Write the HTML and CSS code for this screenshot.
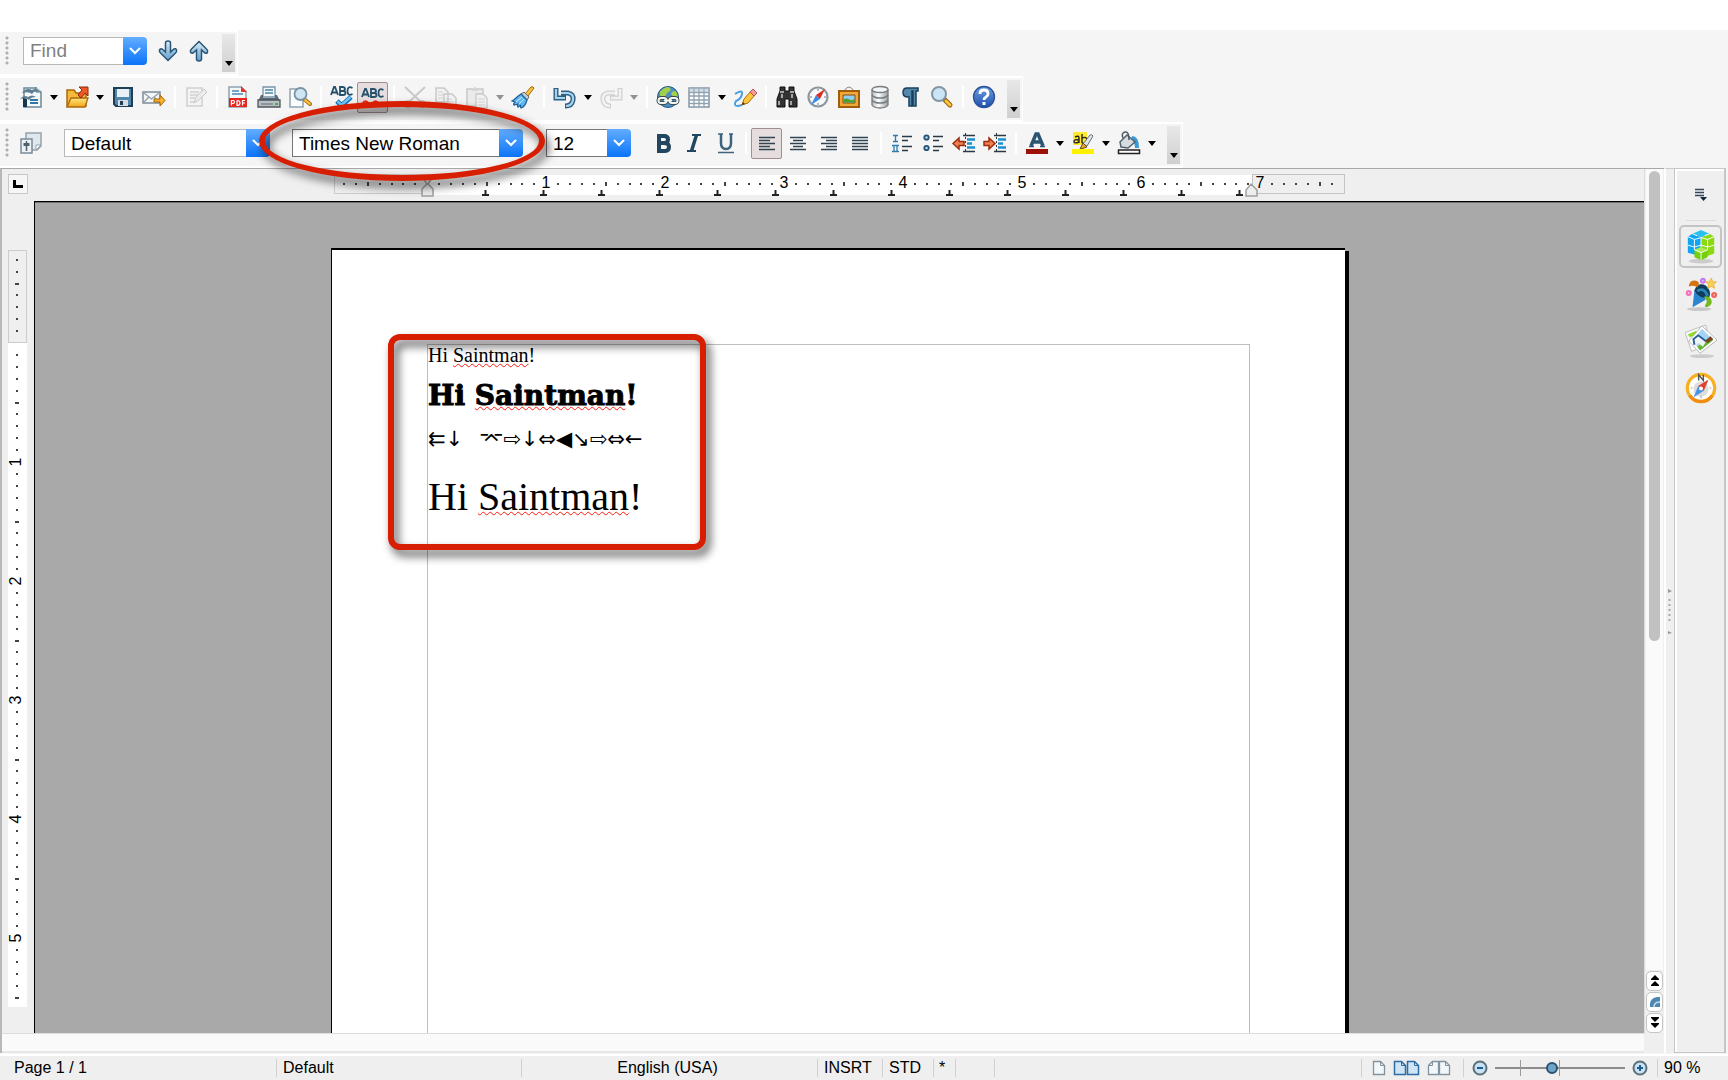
FILE: index.html
```html
<!DOCTYPE html>
<html lang="en">
<head>
<meta charset="utf-8">
<title>Untitled 1 - Writer</title>
<link rel="stylesheet" href="styles.css">
</head>
<body>
<svg class="defs" aria-hidden="true">
  <defs>
    <linearGradient id="gBlue" x1="0" y1="0" x2="0" y2="1"><stop offset="0" stop-color="#d9ecf8"/><stop offset="1" stop-color="#5f9fcb"/></linearGradient>
    <linearGradient id="gGold" x1="0" y1="0" x2="0" y2="1"><stop offset="0" stop-color="#ffe680"/><stop offset="1" stop-color="#f2a516"/></linearGradient>
    <linearGradient id="gGrey" x1="0" y1="0" x2="1" y2="0"><stop offset="0" stop-color="#b9bdc0"/><stop offset=".4" stop-color="#fff"/><stop offset="1" stop-color="#9a9ea1"/></linearGradient>
    <linearGradient id="gHelp" x1="0" y1="0" x2="0" y2="1"><stop offset="0" stop-color="#6f9fe0"/><stop offset="1" stop-color="#1d4fae"/></linearGradient>
    <symbol id="caret" viewBox="0 0 8 5"><path d="M0 0h8L4 5z" fill="currentColor"/></symbol>
    <symbol id="chev" viewBox="0 0 12 8"><path d="M1.500 1.500 6 6l4.500-4.500" fill="none" stroke="#fff" stroke-width="2" stroke-linecap="round"/></symbol>
  </defs>
</svg>

<header class="toolbars">
  <div class="toolbar" role="toolbar" aria-label="Find">
    <span class="grip"></span>
    <div class="combo find"><input type="text" placeholder="Find" aria-label="Find"><button class="drop" aria-label="Find history"><svg width="12" height="8"><use href="#chev"/></svg></button></div>
    <button class="tool" aria-label="Find next"><svg viewBox="0 0 24 24"><path d="M9.500 4q0-2 2.500-2t2.500 2v9l3.500-3q2-1 2.500 1t-1 3l-7.500 7.500-7.500-7.500q-1.500-1.500-1-3t2.500-1l3.500 3z" fill="url(#gBlue)" stroke="#2c5675" stroke-width="1.500"/></svg></button>
    <button class="tool" aria-label="Find previous"><svg viewBox="0 0 24 24"><path d="M9.500 20q0 2 2.500 2t2.500-2v-9l3.500 3q2 1 2.500-1t-1-3l-7.500-7.500-7.500 7.500q-1.500 1.500-1 3t2.500 1l3.500-3z" fill="url(#gBlue)" stroke="#2c5675" stroke-width="1.500"/></svg></button>
    <button class="more" aria-label="More"><svg width="8" height="5"><use href="#caret"/></svg></button>
  </div>

  <div class="toolbar" role="toolbar" aria-label="Standard">
    <span class="grip"></span>
    <button class="tool" aria-label="New"><svg viewBox="0 0 24 24"><path d="M5 3h12l5 4v15H5z" fill="#f7fafc" stroke="#6d8798" stroke-width="1.500"/><path d="M17 2v5h5" fill="#c9dbe6" stroke="#49687d"/><path d="M3 8q4-6 10-3 5-3 8 2-6-2-8 2-3-3-10-1zM1 14q4-5 8-2 4-3 8 0-5 0-7 3-3-3-9-1z" fill="#5d7d93"/><path d="M11 15h8M11 18h8" stroke="#2f77a8" stroke-width="2"/><path d="M4 13v9h4v-8z" fill="#17374d"/></svg></button>
    <button class="caret" aria-label="New options"><svg width="8" height="5"><use href="#caret"/></svg></button>
    <button class="tool" aria-label="Open"><svg viewBox="0 0 24 24"><path d="M2 21V5h7l2 3h10v13z" fill="#f6b93b" stroke="#a96a0c" stroke-width="1.500"/><path d="M2 22l4-9h17l-3 9z" fill="url(#gGold)" stroke="#a96a0c" stroke-width="1.300"/><path d="M14 2h9v9l-3-3-4 5-3-3 4-5z" fill="#ef5a24" stroke="#8e2a0a"/></svg></button>
    <button class="caret" aria-label="Open options"><svg width="8" height="5"><use href="#caret"/></svg></button>
    <button class="tool" aria-label="Save"><svg viewBox="0 0 24 24"><path d="M3 3h18v18H5l-2-2z" fill="#5187ab" stroke="#1d3f56" stroke-width="2"/><path d="M6 4h12v8H6z" fill="#e9f1f6"/><path d="M7 15h10v6H7z" fill="#d5dde2"/><path d="M9 16h3v4H9z" fill="#1d3f56"/></svg></button>
    <button class="tool" aria-label="E-mail"><svg viewBox="0 0 24 24"><path d="M1 7h17v11H1z" fill="#f4f6f8" stroke="#7c8d99" stroke-width="1.500"/><path d="M2 8l7.500 6L17 8M2 17l5-5M17 17l-5-5" fill="none" stroke="#8fa0ab" stroke-width="1.300"/><path d="M12 14h6v-4l5 5.500-5 5.500v-4h-6z" fill="#fbb62c" stroke="#a65f07"/></svg></button>
    <span class="sep"></span>
    <button class="tool dim" aria-label="Edit file" disabled><svg viewBox="0 0 24 24"><path d="M3 3h15v18H3z" fill="#f4f4f4" stroke="#999" stroke-width="1.500"/><path d="M6 7h9M6 10h8M6 13h5M6 17h5" stroke="#999" stroke-width="1.500"/><path d="M10 18l2-6 8-8 3 3-8 8z" fill="#ddd" stroke="#888"/></svg></button>
    <span class="sep"></span>
    <button class="tool" aria-label="Export as PDF"><svg viewBox="0 0 24 24"><path d="M3 2h12l5 5v15H3z" fill="#f5f8fa" stroke="#8ea1ae" stroke-width="1.500"/><path d="M15 1l6 6h-6z" fill="#e8352a"/><path d="M6 6h7M6 9h11" stroke="#4d88b3" stroke-width="1.500"/><path d="M3 13h18v9H3z" fill="#e8261e"/><path d="M5.500 20.500v-5H7q1.500 0 1.500 1.500T7 18.500H5.500M11 15.500v5q3 0 3-2.500t-3-2.500M16.500 20.500v-5H19M16.500 18H19" fill="none" stroke="#fff" stroke-width="1.200"/></svg></button>
    <button class="tool" aria-label="Print"><svg viewBox="0 0 24 24"><path d="M6 2h12v10H6z" fill="#f4f8fb" stroke="#7793a8" stroke-width="1.300"/><path d="M8 5h8M8 8h8" stroke="#4b84ad" stroke-width="1.500"/><path d="M4 10h2v3h12v-3h2l3 6H1z" fill="#5c6b75"/><path d="M1 15h22v7H1z" fill="#b9c0c5" stroke="#4d565c" stroke-width="1.300"/><path d="M4 19h12" stroke="#606a70"/><path d="M18 18h3v2h-3z" fill="#3db53a"/></svg></button>
    <button class="tool" aria-label="Page preview"><svg viewBox="0 0 24 24"><path d="M2 4h13v18H2z" fill="#fbfcfd" stroke="#8ea1ae" stroke-width="1.500"/><path d="M16 14l6 5" stroke="#a96a0c" stroke-width="4" stroke-linecap="round"/><path d="M17 15l5 4" stroke="#ffc840" stroke-width="2" stroke-linecap="round"/><circle cx="12.500" cy="9" r="6" fill="#cfe6f5" stroke="#7a93a5" stroke-width="1.800"/></svg></button>
    <span class="sep"></span>
    <button class="tool" aria-label="Spelling"><svg viewBox="0 0 24 24"><path d="M1 10l3-8h1l3 8M2.500 7.500h4M10 2v8h3q2.500 0 2.500-2T13 6h-3 2.500Q15 6 15 4t-2.500-2zM22.500 3q-5-2.500-5 3t5 3" fill="none" stroke="#24506c" stroke-width="1.800"/><path d="M7 16l4.500 4.500L21 12" fill="none" stroke="#1a6fae" stroke-width="5"/><path d="M7.500 16.500l4 3.500 9-8" fill="none" stroke="#6fc5f7" stroke-width="2.500"/></svg></button>
    <button class="tool on" aria-label="AutoSpellcheck" aria-pressed="true"><svg viewBox="0 0 24 24"><path d="M1 12l3-8h1l3 8M2.500 9.500h4M10 4v8h3q2.500 0 2.500-2T13 8h-3 2.500Q15 8 15 6t-2.500-2zM22.500 5q-5-2.500-5 3t5 3" fill="none" stroke="#24506c" stroke-width="1.800"/><path d="M2 18q2.500-3 5 0t5 0 5 0 5 0" fill="none" stroke="#ee2a1a" stroke-width="2.500"/></svg></button>
    <span class="sep"></span>
    <button class="tool dim" aria-label="Cut" disabled><svg viewBox="0 0 24 24"><path d="M2 2l16 15M22 2L6 17" stroke="#888" stroke-width="2"/><circle cx="5" cy="19" r="3" fill="none" stroke="#888" stroke-width="2"/><circle cx="19" cy="19" r="3" fill="none" stroke="#888" stroke-width="2"/></svg></button>
    <button class="tool dim" aria-label="Copy" disabled><svg viewBox="0 0 24 24"><path d="M2 3h8l4 4v10H2zM10 9h8l4 4v9H10z" fill="#eee" stroke="#888" stroke-width="1.500"/><path d="M4 7h5M4 10h5M4 13h5M12 14h6M12 17h8M12 20h8" stroke="#999"/></svg></button>
    <button class="tool dim" aria-label="Paste" disabled><svg viewBox="0 0 24 24"><path d="M2 4h16v17H2z" fill="#ddd" stroke="#888" stroke-width="1.500"/><path d="M7 6V3h2q1-3 2 0h2v3z" fill="#aaa"/><path d="M11 9h7l4 4v10H11z" fill="#eee" stroke="#888" stroke-width="1.300"/><path d="M13 14h7M13 17h7M13 20h7" stroke="#999"/></svg></button>
    <button class="caret dim" aria-label="Paste options" disabled><svg width="8" height="5"><use href="#caret"/></svg></button>
    <button class="tool" aria-label="Format paintbrush"><svg viewBox="0 0 24 24"><path d="M14 9l6-7q2-1 3 1l-6 8z" fill="#ffc53a" stroke="#9b6408"/><path d="M13 7l5 5-2 3-6-6z" fill="#c4cdd4" stroke="#5e6b75"/><path d="M10 9l6 6q-2 7-6 8-1-2 0-3l-3 2q-1-2 0-3l-4 1q-1-1 1-3l-3-1q2-1 4-3t5-4z" fill="#62b6ee" stroke="#1b5e96" stroke-width="1.200"/><path d="M5 17l6-5M8 19l5-5" stroke="#cdeaff"/></svg></button>
    <span class="sep"></span>
    <button class="tool" aria-label="Undo"><svg viewBox="0 0 24 24"><path d="M3 3v10h10M8 8h7q6 1 5 7-1 6-8 6" fill="none" stroke="#2c5f84" stroke-width="5"/><path d="M3 4v9h9M8 8h7q6 1 5 7-1 6-7 6" fill="none" stroke="#a9d2ec" stroke-width="2.200"/></svg></button>
    <button class="caret" aria-label="Undo options"><svg width="8" height="5"><use href="#caret"/></svg></button>
    <button class="tool dim" aria-label="Redo" disabled><svg viewBox="0 0 24 24"><path d="M21 3v10H11M16 8H9q-6 1-5 7 1 6 8 6" fill="none" stroke="#999" stroke-width="5"/><path d="M21 4v9h-9M16 8H9q-6 1-5 7 1 6 7 6" fill="none" stroke="#eee" stroke-width="2.500"/></svg></button>
    <button class="caret dim" aria-label="Redo options" disabled><svg width="8" height="5"><use href="#caret"/></svg></button>
    <span class="sep"></span>
    <button class="tool" aria-label="Hyperlink"><svg viewBox="0 0 24 24"><circle cx="12" cy="12" r="10.500" fill="#4c8fc4" stroke="#285a83"/><path d="M4 7q4-5 9-5l2 3-4 3-2 4-5-1zM15 8q4-4 6 0l1 5-5-1z" fill="#a3cf4a"/><rect x="2.500" y="13" width="8" height="5" rx="2.500" fill="none" stroke="#3d4a50" stroke-width="4"/><rect x="13.500" y="13" width="8" height="5" rx="2.500" fill="none" stroke="#3d4a50" stroke-width="4"/><path d="M8 15.500h8" stroke="#3d4a50" stroke-width="4"/><rect x="2.500" y="13" width="8" height="5" rx="2.500" fill="none" stroke="#f4f6f0" stroke-width="2"/><rect x="13.500" y="13" width="8" height="5" rx="2.500" fill="none" stroke="#f4f6f0" stroke-width="2"/><path d="M8 15.500h8" stroke="#f4f6f0" stroke-width="2"/></svg></button>
    <button class="tool" aria-label="Table"><svg viewBox="0 0 24 24"><path d="M2 3h20v19H2z" fill="#fff" stroke="#8397a6" stroke-width="1.500"/><path d="M2 7.500h20M2 11h20M2 15h20M2 18.500h20M7 3v19M12 3v19M17 3v19" stroke="#8fa2b0" stroke-width="1.300"/><path d="M2 3h20v4H2z" fill="#a8bccb" opacity=".5"/></svg></button>
    <button class="caret" aria-label="Table options"><svg width="8" height="5"><use href="#caret"/></svg></button>
    <button class="tool" aria-label="Show draw functions"><svg viewBox="0 0 24 24"><path d="M2 9q8-5 7 0t-6 7q-3 5 2 5l4-1" fill="none" stroke="#4aa0df" stroke-width="2"/><path d="M9 20l2-6 7-8 4 4-7 8z" fill="#ffc83a" stroke="#a86c10"/><path d="M17 7l3-3 4 4-3 3z" fill="#f59a98" stroke="#b55"/><path d="M9 20l1-3 2 2z" fill="#333"/></svg></button>
    <span class="sep"></span>
    <button class="tool" aria-label="Find and replace"><svg viewBox="0 0 24 24"><path d="M5 2h5v4h4V2h5v4l3 8v8h-8v-8h-4v8H2v-8l3-8z" fill="#333" stroke="#111"/><path d="M5 7h4M15 7h4M4 16v4M16 16v4M7 9v4M17 9v4" stroke="#ccc" stroke-width="1.500"/></svg></button>
    <button class="tool" aria-label="Navigator"><svg viewBox="0 0 24 24"><circle cx="12" cy="12" r="9.500" fill="#f7f9fa" stroke="#8c979e" stroke-width="2.200"/><path d="M12 4v2M12 18v2M4 12h2M18 12h2" stroke="#777"/><path d="M5 20l5-10 4 4z" fill="#3b8de0"/><path d="M19 4l-5 10-4-4z" fill="#e4291e"/></svg></button>
    <button class="tool" aria-label="Gallery"><svg viewBox="0 0 24 24"><path d="M7 6q5-8 10 0" fill="none" stroke="#888"/><path d="M2 6h20v16H2z" fill="#f3a83a" stroke="#a05b0b" stroke-width="2"/><path d="M6 10h12v8H6z" fill="#8fd0f5" stroke="#8a4c06"/><path d="M6.500 17.500v-3q3-2 6 0t5-1v4z" fill="#4f9e34"/></svg></button>
    <button class="tool" aria-label="Data sources"><svg viewBox="0 0 24 24"><path d="M4 5v15q2 3 8 3t8-3V5z" fill="url(#gGrey)" stroke="#777e83" stroke-width="1.300"/><ellipse cx="12" cy="4.500" rx="8" ry="3" fill="#f3f4f5" stroke="#777e83" stroke-width="1.300"/><path d="M4 10q2 3 8 3t8-3M4 15q2 3 8 3t8-3" fill="none" stroke="#777e83" stroke-width="1.500"/></svg></button>
    <button class="tool" aria-label="Nonprinting characters"><svg viewBox="0 0 24 24"><path d="M19 3H8Q4 3 4 7.500t5 4.500h1v9h3V6h1v15h3V6h2z" fill="#5288ab" stroke="#1c3f58" stroke-width="1.500"/></svg></button>
    <button class="tool" aria-label="Zoom"><svg viewBox="0 0 24 24"><path d="M14 14l6 6" stroke="#9a6309" stroke-width="5" stroke-linecap="round"/><path d="M16 16l4 4" stroke="#ffc640" stroke-width="2.800" stroke-linecap="round"/><circle cx="9" cy="9" r="7" fill="#cbe5f6" stroke="#8496a3" stroke-width="2"/></svg></button>
    <span class="sep"></span>
    <button class="tool" aria-label="Help"><svg viewBox="0 0 24 24"><circle cx="12" cy="12" r="10.500" fill="url(#gHelp)" stroke="#2b4f98" stroke-width="1.300"/><path d="M8 9q0-4 4-4t4 4q0 2-2 3t-2 3" fill="none" stroke="#fff" stroke-width="2.800"/><path d="M10.500 17h3v3h-3z" fill="#fff"/></svg></button>
    <button class="more" aria-label="More"><svg width="8" height="5"><use href="#caret"/></svg></button>
  </div>

  <div class="toolbar" role="toolbar" aria-label="Formatting">
    <span class="grip"></span>
    <button class="tool" aria-label="Styles and formatting"><svg viewBox="0 0 24 24"><path d="M7 2h15v13l-4 4H7z" fill="#dfe7ec" stroke="#93a4b0" stroke-width="1.500"/><path d="M22 14h-5v5z" fill="#fff" stroke="#93a4b0"/><path d="M2 8h11v14H2z" fill="#eef2f4" stroke="#7a8b98" stroke-width="1.500"/><path d="M7.500 10v10" stroke="#4f6270" stroke-width="1.500"/><path d="M4.500 12h6v3h-6z" fill="#4f6270"/></svg></button>
    <div class="combo style"><select aria-label="Paragraph style"><option>Default</option></select><span class="drop"><svg width="12" height="8"><use href="#chev"/></svg></span></div>
    <div class="combo font"><select aria-label="Font name"><option>Times New Roman</option></select><span class="drop"><svg width="12" height="8"><use href="#chev"/></svg></span><span class="mark oval"></span></div>
    <div class="combo size"><select aria-label="Font size"><option>12</option></select><span class="drop"><svg width="12" height="8"><use href="#chev"/></svg></span></div>
    <button class="tool" aria-label="Bold"><svg viewBox="0 0 24 24"><path d="M8 5h5q4 0 4 3.500T13 12H9h4q5 0 5 4t-5 4H8z" fill="none" stroke="#22465f" stroke-width="4"/></svg></button>
    <button class="tool" aria-label="Italic"><svg viewBox="0 0 24 24"><path d="M10 4h9M5 20h9" stroke="#22465f" stroke-width="2"/><path d="M14.500 4l-5 16" stroke="#22465f" stroke-width="3.500"/></svg></button>
    <button class="tool" aria-label="Underline"><svg viewBox="0 0 24 24"><path d="M8 3v9q0 6 5 6t5-6V3" fill="none" stroke="#3d637d" stroke-width="2.500"/><path d="M5 3h5M16 3h4M5 21.500h16" stroke="#3d637d" stroke-width="1.500"/></svg></button>
    <span class="sep"></span>
    <button class="tool on" aria-label="Align left" aria-pressed="true"><svg viewBox="0 0 24 24"><path d="M4 6.500h16M4 9.500h11M4 12.500h16M4 15.500h11M4 18.500h16" stroke="#2f4350" stroke-width="1.500"/></svg></button>
    <button class="tool" aria-label="Centered"><svg viewBox="0 0 24 24"><path d="M4 6.500h16M7 9.500h10M4 12.500h16M7 15.500h10M4 18.500h16" stroke="#2f4350" stroke-width="1.500"/></svg></button>
    <button class="tool" aria-label="Align right"><svg viewBox="0 0 24 24"><path d="M4 6.500h16M9 9.500h11M4 12.500h16M9 15.500h11M4 18.500h16" stroke="#2f4350" stroke-width="1.500"/></svg></button>
    <button class="tool" aria-label="Justified"><svg viewBox="0 0 24 24"><path d="M4 6.500h16M4 9.500h16M4 12.500h16M4 15.500h16M4 18.500h16" stroke="#2f4350" stroke-width="1.500"/></svg></button>
    <span class="sep"></span>
    <button class="tool" aria-label="Numbering"><svg viewBox="0 0 24 24"><path d="M3 4.500h5M5.500 4v6M3 10.500h5M2 14.500h7M4 14v6M7 14v6M2 20.500h7" stroke="#2f7cae" stroke-width="1.300"/><path d="M12 5.500h10M12 9.500h6M12 15.500h10M12 19.500h6" stroke="#2a3a44" stroke-width="1.600"/></svg></button>
    <button class="tool" aria-label="Bullets"><svg viewBox="0 0 24 24"><circle cx="5.500" cy="6.500" r="2.200" fill="#b5d6ec" stroke="#235478" stroke-width="1.800"/><circle cx="5.500" cy="17" r="2.200" fill="#b5d6ec" stroke="#235478" stroke-width="1.800"/><path d="M12 5.500h10M12 9.500h6M12 15.500h10M12 19.500h6" stroke="#2a3a44" stroke-width="1.600"/></svg></button>
    <button class="tool" aria-label="Decrease indent"><svg viewBox="0 0 24 24"><path d="M13.500 2v20" stroke="#333" stroke-dasharray="2 2"/><path d="M11 4.500h12M11 20.500h12" stroke="#2a3a44" stroke-width="1.500"/><path d="M15 8.500h8M15 12.500h5M15 16.500h8" stroke="#1b8fd0" stroke-width="2.500"/><path d="M1 12.500L7 7v3.500h5v4H7V18z" fill="#f08050" stroke="#9d2c0c" stroke-width="1.500"/></svg></button>
    <button class="tool" aria-label="Increase indent"><svg viewBox="0 0 24 24"><path d="M13.500 2v20" stroke="#333" stroke-dasharray="2 2"/><path d="M11 4.500h12M11 20.500h12" stroke="#2a3a44" stroke-width="1.500"/><path d="M15 8.500h8M15 12.500h5M15 16.500h8" stroke="#1b8fd0" stroke-width="2.500"/><path d="M12 12.500L6 7v3.500H1v4h5V18z" fill="#f08050" stroke="#9d2c0c" stroke-width="1.500"/></svg></button>
    <span class="sep"></span>
    <button class="tool" aria-label="Font color"><svg viewBox="0 0 24 24"><path d="M6 15l5-12h2l5 12M8.500 11h7" fill="none" stroke="#2b5573" stroke-width="3.500"/><path d="M4 15.500h5M15 15.500h5" stroke="#2b5573" stroke-width="1.500"/><path d="M1 18h22v5H1z" fill="#9c1006"/></svg></button>
    <button class="caret" aria-label="Font color options"><svg width="8" height="5"><use href="#caret"/></svg></button>
    <button class="tool" aria-label="Highlighting"><svg viewBox="0 0 24 24"><path d="M2 1h14v13H2z" fill="#ffe92e"/><path d="M4 6q4-2 4 1v5M8 9q-5-1-5 1.500T8 11M11 3v9M11 7q5-2 5 2.500T11 12" fill="none" stroke="#222" stroke-width="1.400"/><path d="M12 13l7-9q2-1 3 1l-6 10z" fill="#dfe4e8" stroke="#66727a"/><path d="M12 12l4 4-3 1-4 1z" fill="#e7a72c" stroke="#6b4a0c"/><path d="M1 18h22v5H1z" fill="#fff200"/></svg></button>
    <button class="caret" aria-label="Highlighting options"><svg width="8" height="5"><use href="#caret"/></svg></button>
    <button class="tool" aria-label="Background color"><svg viewBox="0 0 24 24"><path d="M15 5q7 0 7 12h-4q0-6-4-8z" fill="#3c9ad4"/><path d="M3 11l7-7 8 7-7 6-7-1z" fill="#d6dde2" stroke="#56646e" stroke-width="1.500"/><path d="M6 7q-2-5 2-6t4 8" fill="none" stroke="#4b5962" stroke-width="1.500"/><path d="M1.500 19h21v3.500h-21z" fill="#fff" stroke="#222" stroke-width="1.500"/></svg></button>
    <button class="caret" aria-label="Background color options"><svg width="8" height="5"><use href="#caret"/></svg></button>
    <button class="more" aria-label="More"><svg width="8" height="5"><use href="#caret"/></svg></button>
  </div>
</header>

<main class="workspace">
  <section class="editor">
    <div class="corner"><button aria-label="Tab type"><svg width="10" height="8"><path d="M1.500 0v6.500H10" fill="none" stroke="#000" stroke-width="3"/></svg></button></div>
    <div class="hruler">
      <svg width="1014" height="32" aria-label="Horizontal ruler">
        <defs>
          <pattern id="inch" x="95" y="0" width="119" height="32" patternUnits="userSpaceOnUse"><path d="M11 15h2M23 15h2M35 15h2M47 15h2M71 15h2M83 15h2M94 15h2M106 15h2" stroke="#444" stroke-width="2"/><path d="M60 13v4" stroke="#444" stroke-width="2"/></pattern>
          <pattern id="tabs" x="124" y="0" width="58" height="32" patternUnits="userSpaceOnUse"><path d="M26 26h7M29.500 21v5" stroke="#222" stroke-width="2"/></pattern>
        </defs>
        <rect x="96" y="6" width="824" height="20" fill="#fff"/>
        <rect x="2.500" y="5.500" width="93" height="19" fill="#efefef" stroke="#ccc"/>
        <rect x="920.500" y="5.500" width="92" height="19" fill="#efefef" stroke="#c4c4c4"/>
        <rect x="4" y="8" width="1007" height="14" fill="url(#inch)"/>
        <rect x="124" y="19" width="790" height="9" fill="url(#tabs)"/>
        <path d="M91 9h9l-4 6 5 5v7H90v-7l5-5zM914 27v-6l5-6 6 6v6z" fill="#eee" stroke="#a0a0a0" stroke-width="1.500"/>
        <g class="digits"><text x="214" y="19">1</text><text x="333" y="19">2</text><text x="452" y="19">3</text><text x="571" y="19">4</text><text x="690" y="19">5</text><text x="809" y="19">6</text><text x="928" y="19">7</text></g>
      </svg>
    </div>
    <div class="vruler">
      <svg width="32" height="831" aria-label="Vertical ruler">
        <defs><pattern id="vinch" x="0" y="142" width="32" height="119" patternUnits="userSpaceOnUse"><path d="M14 12h2M14 24h2M14 36h2M14 48h2M14 71h2M14 83h2M14 95h2M14 107h2M13 60h4" stroke="#444" stroke-width="2"/></pattern></defs>
        <rect x="6" y="141" width="19" height="665" fill="#fff"/>
        <rect x="6.500" y="49.500" width="18" height="92" fill="#efefef" stroke="#ccc"/>
        <rect x="8" y="54" width="15" height="750" fill="url(#vinch)"/>
        <g class="digits"><text transform="translate(19 261) rotate(-90)">1</text><text transform="translate(19 380) rotate(-90)">2</text><text transform="translate(19 499) rotate(-90)">3</text><text transform="translate(19 618) rotate(-90)">4</text><text transform="translate(19 737) rotate(-90)">5</text></g>
      </svg>
    </div>
    <div class="canvas">
      <article class="page">
        <div class="frame">
          <p class="times">Hi <u>Saintman</u>!</p>
          <p class="latin">Hi <u>Saintman</u>!</p>
          <p class="arrows">⇇↓&emsp14;&emsp14;&emsp14;⌤⇨↓⇔◀↘⇨⇔←</p>
          <p class="times large">Hi <u>Saintman</u>!</p>
          <span class="mark box"></span>
        </div>
      </article>
    </div>
    <div class="vscroll">
      <div class="track"><span class="thumb"></span></div>
      <button aria-label="Previous page"><svg width="8" height="12"><path d="M4 0l4 4v1H0V4zM4 6l4 4v1H0v-1z"/></svg></button>
      <button aria-label="Navigation"><svg width="10" height="10"><path d="M0 10V6q1-5 7-6h3v10z" fill="#4f87b0"/><path d="M4 10q0-5 6-5" fill="none" stroke="#bcdcf2" stroke-width="1.500"/></svg></button>
      <button aria-label="Next page"><svg width="8" height="12"><path d="M4 5l4-4V0H0v1zM4 11l4-4V6H0v1z"/></svg></button>
    </div>
    <div class="hscroll"></div>
  </section>

  <div class="splitter"><svg width="6" height="46"><path d="M1 1l4 2-4 2zM1 43l4 2-4 1z" fill="#999"/><path d="M2.500 11v25" stroke="#aaa" stroke-width="2" stroke-dasharray="2 3"/></svg></div>

  <aside class="sidebar">
    <button class="menu" aria-label="Sidebar settings"><svg width="12" height="13"><path d="M0 1.500h9M0 4.500h9M0 7.500h9" stroke="#34465c" stroke-width="1.500"/><path d="M5 9h7l-3.500 4z" fill="#14243f"/></svg></button>
    <button class="tab on" aria-label="Properties"><svg viewBox="0 0 34 36"><ellipse cx="17" cy="33" rx="13" ry="2.500" fill="#ccc"/><path d="M8 4l9-4 9 4-9 4z" fill="#2cc0ee"/><path d="M3 7l5-3 9 4v20L3 24z" fill="#10a5f0"/><path d="M17 8l9-4 5 3v18l-14 5z" fill="#8ad90f"/><path d="M10 21l7-3 7 3v8l-7 3-7-3z" fill="#75cf0c"/><path d="M10 21l7-3 7 3-7 3z" fill="#aaec55"/><path d="M3 7l7 3 7-2 7 2 7-3M10 10v11M17 8v10M24 10v11M3 16l7 2 7-2 7 2 7-2M17 24v8M10 21l7 3 7-3M8 4l5 2M26 4l-5 2" fill="none" stroke="#fff"/></svg></button>
    <button class="tab" aria-label="Styles and Formatting"><svg viewBox="0 0 34 36"><ellipse cx="15" cy="34" rx="13" ry="2" fill="#c9c9c9"/><path d="M10 14L8 32l14-8-2-6z" fill="#2b86cf"/><path d="M10 14q4-9 12-5 6 5 4 12-10 4-16-7z" fill="#0e3d5c"/><path d="M13 15q7-5 11 5" fill="none" stroke="#2a86b8" stroke-width="3"/><path d="M4 10q1-8 8-6 5 2 1 7-3-3-9-1z" fill="#d4730f"/><path d="M20 21q5-2 8 3 2 6-5 8-3 0-1-3 3-4-2-8z" fill="#74b820"/><path d="M28 1l1.500 4 4 0-3 3 1 4-3.500-2-4 2 1-4-3-3 4 0z" fill="#f7d058" stroke="#e8a820" stroke-width=".7"/><g fill="none" stroke-width="2.400"><circle cx="19" cy="4" r="2" stroke="#c97af0"/><circle cx="4" cy="17" r="2" stroke="#f472ba"/><circle cx="31" cy="19" r="2" stroke="#f3625a"/></g></svg></button>
    <button class="tab" aria-label="Gallery"><svg viewBox="0 0 34 36"><ellipse cx="18" cy="34" rx="13" ry="2" fill="#ccc"/><path d="M0 9l22-8 5 20L7 29z" fill="#fafafa" stroke="#bbb"/><path d="M3 11l9-4 1 4-8 3z" fill="#8edb1d"/><path d="M18 2l16 15-18 14L4 18z" fill="#fff" stroke="#b4b4b4"/><path d="M18 5l12 12-14 11L8 18z" fill="#a3d4f5"/><path d="M30 17L16 28l-3-4 14-10z" fill="#66b52a"/><path d="M9 17l5-5 8 7-3 5-5-4-2 3z" fill="#eef4f8"/><path d="M10 22l-1-6 5-4 8 6" fill="none" stroke="#245e96" stroke-width="2"/><path d="M21 18l6-5 3 3-6 4z" fill="#7b4522"/></svg></button>
    <button class="tab" aria-label="Navigator"><svg viewBox="0 0 34 36"><circle cx="17" cy="18" r="14.500" fill="#fff" stroke="#f6b020" stroke-width="3.500"/><path d="M5 26a14.500 14.500 0 0 0 24 0" fill="none" stroke="#f08c10" stroke-width="3.500"/><path d="M14.500 10V4l5 6V4" fill="none" stroke="#555" stroke-width="1.500"/><circle cx="17" cy="19" r="8" fill="#ddd"/><path d="M17 26v3M8 18H6M28 18h-2" stroke="#999"/><path d="M9 28l5-12 6 5z" fill="#4b95e8"/><path d="M25 9l-5 12-6-5z" fill="#e0412f"/><circle cx="17" cy="18.500" r="2" fill="#fff"/></svg></button>
  </aside>
</main>

<footer class="status">
  <span class="cell page-no">Page 1 / 1</span>
  <span class="cell page-style">Default</span>
  <span class="cell lang">English (USA)</span>
  <span class="cell insert">INSRT</span>
  <span class="cell select">STD</span>
  <span class="cell changed">*</span>
  <span class="cell signature"></span>
  <span class="cell info"></span>
  <span class="cell views">
    <button aria-label="Single page"><svg width="14" height="16"><path d="M1.500 1.500h7l4 4v9h-11z" fill="#f4f7f9" stroke="#8293a0" stroke-width="1.300"/><path d="M8.500 1.500v4h4" fill="none" stroke="#8293a0"/></svg></button>
    <button aria-label="Multiple pages"><svg width="27" height="16"><path d="M1.500 1.500h7l4 4v9h-11zM14.500 1.500h7l4 4v9h-11z" fill="#cfe5f6" stroke="#2d6da3" stroke-width="1.500"/><path d="M8.500 1.500v4h4M21.500 1.500v4h4" fill="none" stroke="#2d6da3"/></svg></button>
    <button aria-label="Book view"><svg width="24" height="16"><path d="M1.500 5.500l4-4h6v13h-10zM12.500 1.500h6l4 4v9h-10z" fill="#f4f7f9" stroke="#8293a0" stroke-width="1.300"/><path d="M5.500 1.500v4h-4M18.500 1.500v4h4" fill="none" stroke="#8293a0"/></svg></button>
  </span>
  <span class="cell zoom">
    <button aria-label="Zoom out"><svg width="16" height="16"><circle cx="8" cy="8" r="6.500" fill="#c6e2f6" stroke="#5f6f7a" stroke-width="2"/><path d="M5 8h6" stroke="#1d5c8c" stroke-width="2"/></svg></button>
    <input type="range" min="0" max="100" value="43" aria-label="Zoom">
    <button aria-label="Zoom in"><svg width="16" height="16"><circle cx="8" cy="8" r="6.500" fill="#c6e2f6" stroke="#5f6f7a" stroke-width="2"/><path d="M5 8h6M8 5v6" stroke="#1d5c8c" stroke-width="2"/></svg></button>
  </span>
  <span class="cell percent">90 %</span>
</footer>
</body>
</html>
```
FILE: styles.css
```css
* { box-sizing: border-box; }

body {
  margin: 0;
  padding-top: 30px;
  height: 100vh;
  display: flex;
  flex-direction: column;
  overflow: hidden;
  background: #fff;
  color: #000;
  font-family: "Liberation Sans", Arial, sans-serif;
  font-size: 16px;
}

button, input, select { font: inherit; color: inherit; margin: 0; }
button { padding: 0; border: 0; background: none; display: flex; align-items: center; justify-content: center; }
.defs { position: absolute; width: 0; height: 0; }

/* Toolbars */
.toolbars { background: #f5f5f5; display: flex; flex-direction: column; align-items: flex-start; }
.toolbar {
  display: flex;
  align-items: center;
  height: 46px;
  padding: 0 2px 4px 5px;
  border: solid #fff;
  border-width: 2px 1px 2px 0;
}
.grip {
  width: 10px;
  height: 30px;
  background: radial-gradient(circle at 2px 2px, #b0b0b0 1px, transparent 2px) 0 0 / 10px 5px;
  background-repeat: repeat-y;
}
.tool { width: 31px; height: 31px; flex: none; }
.tool svg { width: 24px; height: 24px; }
.tool.on { border: 1px solid #a08f8f; border-radius: 2px; background: #e6dede; }
.caret { width: 15px; height: 31px; flex: none; }
.dim { opacity: .4; }
.sep { width: 11px; height: 22px; flex: none; background: linear-gradient(#fff, #fff) center / 2px 100% no-repeat; }
.more {
  width: 13px;
  height: 38px;
  margin: 0 0 -4px 8px;
  padding-bottom: 6px;
  align-items: flex-end;
  background: linear-gradient(#e8e8e8, #cfcfcf);
}

.combo { display: flex; position: relative; height: 28px; font-size: 19px; }
.combo input, .combo select {
  flex: 1;
  min-width: 0;
  height: 28px;
  padding: 0 0 0 6px;
  border: 1px solid #b8b8b8;
  border-right: 0;
  border-radius: 0;
  background: #fff;
  appearance: none;
  outline: 0;
}
.combo input::placeholder { color: #808080; opacity: 1; }
.drop {
  width: 24px;
  height: 28px;
  display: flex;
  align-items: center;
  justify-content: center;
  border-radius: 0 4px 4px 0;
  background: linear-gradient(#63adff, #0a74f8);
  pointer-events: none;
}
.find { width: 124px; margin: 0 5px 0 8px; }
.style { width: 206px; margin-left: 18px; }
.font { width: 231px; margin-left: 22px; }
.font select, .size select { border-color: #777; }
.size { width: 85px; margin: 0 16px 0 23px; }

/* Red annotations */
.mark {
  position: absolute;
  z-index: 5;
  border: 6px solid #d81e00;
  filter: drop-shadow(4px 6px 5px rgba(0, 0, 0, .7));
  pointer-events: none;
}
.oval { left: -33px; top: -28px; width: 286px; height: 80px; border-radius: 50%; }
.box { left: -40px; top: -11px; width: 318px; height: 216px; border-radius: 12px; }

/* Workspace */
.workspace { flex: 1; min-height: 0; display: flex; background: #f5f5f5; padding-bottom: 1px; }
.editor {
  flex: 1;
  min-width: 0;
  display: grid;
  grid-template: 32px minmax(0, 1fr) 20px / 32px minmax(0, 1fr) 20px;
  border-top: 1px solid #a8a8a8;
  border-left: 2px solid #b8b8b8;
  background: #efefef;
}
.corner { padding: 5px 0 0 6px; }
.corner button { width: 20px; height: 20px; border: 1px solid #c8c8c8; background: #f6f6f6; }
.hruler { display: flex; justify-content: center; overflow: hidden; }
.hruler svg, .vruler svg { flex: none; display: block; }
.vruler { overflow: hidden; }
.digits { font-size: 16px; text-anchor: middle; }
.canvas {
  overflow: hidden;
  display: flex;
  justify-content: center;
  padding: 46px 3px 0 0;
  border: solid #000;
  border-width: 1px 0 0 1px;
  background: #a9a9a9;
  box-shadow: inset 0 1px #707070;
}
.page {
  flex: none;
  width: 1014px;
  min-height: 1300px;
  padding: 94px 95px;
  background: #fff;
  border: solid #000;
  border-width: 2px 0 0 1px;
  box-shadow: 4px 3px #000;
}
.frame { position: relative; height: 1100px; border: 1px solid #bdbdbd; }
.frame p { margin: 0; white-space: nowrap; }
.frame u { text-decoration: underline wavy #ff1a10 1px; text-underline-offset: 1px; text-decoration-skip-ink: none; }
.times { font: 20px/20px "Liberation Serif", "Times New Roman", serif; }
.frame .latin { margin-top: 16px; font: bold 28px/30px "DejaVu Serif", serif; -webkit-text-stroke: 1px #000; }
.frame .arrows { margin-top: 16px; font: 21px/24px "DejaVu Sans", sans-serif; }
.frame .large { margin-top: 24px; font-size: 40px; line-height: 44px; }

.vscroll {
  grid-area: 1 / 3 / 3 / 4;
  display: flex;
  flex-direction: column;
  align-items: center;
  gap: 1px;
  border-left: 1px solid #ddd;
}
.track { flex: 1; width: 17px; padding: 2px 3px; background: #fafafa; }
.thumb { display: block; width: 11px; height: 59%; border-radius: 6px; background: #c1c1c1; }
.vscroll button { width: 17px; height: 20px; border: 1px solid #c4c4c4; border-radius: 5px; background: #fff; }
.hscroll { grid-column: 1 / 3; border-top: 1px solid #ddd; border-bottom: 2px solid #e6e6e6; background: #fafafa; }
.splitter {
  width: 10px;
  display: flex;
  align-items: center;
  justify-content: center;
  border-left: 2px solid #fff;
  border-top: 1px solid #ccc;
  background: #efefef;
}
.sidebar {
  width: 52px;
  display: flex;
  flex-direction: column;
  align-items: center;
  gap: 4px;
  padding-left: 2px;
  border: solid #c6c6c6;
  border-width: 1px 2px 1px 1px;
  margin-right: 2px;
  background: #efefef;
  box-shadow: inset 2px 2px #fff;
}
.menu { width: 30px; height: 52px; border-bottom: 1px solid #ddd; }
.tab { width: 43px; height: 43px; }
.tab svg { width: 32px; height: 34px; }
.tab.on { border: 2px solid #c4c4c4; border-radius: 5px; }

/* Status bar */
.status {
  height: 26px;
  flex: none;
  display: flex;
  align-items: center;
  border-top: 2px solid #fff;
  background: #efefef;
}
.cell { height: 18px; line-height: 18px; display: flex; align-items: center; flex: none; border-right: 1px solid #d0d0d0; padding-left: 6px; white-space: nowrap; }
.page-no { width: 277px; padding-left: 14px; }
.page-style { width: 245px; }
.lang { width: 296px; padding: 0 4px 0 0; justify-content: center; }
.insert { width: 65px; }
.select { width: 51px; }
.changed { width: 22px; padding-left: 5px; }
.signature { width: 39px; }
.info { flex: 1; }
.views { width: 102px; gap: 7px; padding-left: 10px; }
.zoom { width: 194px; gap: 7px; padding-left: 8px; }
.zoom input {
  width: 130px;
  height: 16px;
  appearance: none;
  background:
    linear-gradient(#999, #999) 25px 0 / 1px 100% no-repeat,
    linear-gradient(#999, #999) 64px 0 / 1px 100% no-repeat,
    linear-gradient(#8c8c8c, #8c8c8c) center / 100% 2px no-repeat;
}
.zoom input::-webkit-slider-thumb { appearance: none; width: 12px; height: 12px; border: 2px solid #2a5270; border-radius: 50%; background: #6fa3c8; }
.percent { width: 70px; border: 0; }
```
